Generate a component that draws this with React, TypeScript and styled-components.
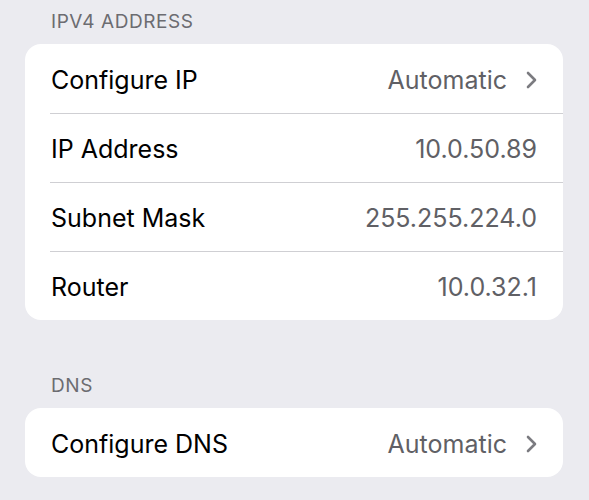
import React from "react";
import styled, { createGlobalStyle } from "styled-components";

const Global = createGlobalStyle`
  html, body {
    margin: 0;
    padding: 0;
    background: #ebebf0;
  }
  body {
    font-family: Inter, "Noto Sans", "Liberation Sans", sans-serif;
    -webkit-font-smoothing: antialiased;
  }
`;

const Page = styled.div`
  width: 589px;
  height: 500px;
  box-sizing: border-box;
  padding: 10px 26px 0 25px;
  background: #ebebf0;
  overflow: hidden;
`;

const Section = styled.section<{ $gap?: number }>`
  margin-top: ${(p) => p.$gap ?? 0}px;
`;

const Header = styled.div`
  padding-left: 26px;
  font-size: 19px;
  line-height: 23px;
  color: #6c6c71;
  letter-spacing: 0.55px;
  margin-bottom: 11px;
`;

const Card = styled.div`
  background: #ffffff;
  border-radius: 16px;
  overflow: hidden;
`;

const Row = styled.div`
  display: flex;
  padding-left: 25px;
`;

const RowInner = styled.div<{ $first: boolean }>`
  flex: 1;
  display: flex;
  align-items: center;
  justify-content: space-between;
  height: 69px;
  box-sizing: border-box;
  padding-right: 26px;
  padding-top: 2px;
  border-top: ${(p) => (p.$first ? "none" : "1px solid #cfcfd3")};
`;

const Label = styled.span`
  font-size: 25px;
  color: #000000;
  padding-left: 1px;
`;

const Value = styled.span`
  display: flex;
  align-items: center;
  gap: 19px;
  font-size: 25px;
  color: #606065;
`;

const Chevron = styled.svg`
  width: 11px;
  height: 18px;
  display: block;
`;

type Item = { label: string; value: string; link?: boolean };

const ChevronIcon = () => (
  <Chevron viewBox="0 0 11 18" fill="none">
    <path
      d="M2 2 L9 9 L2 16"
      stroke="#7b7b80"
      strokeWidth="2.6"
      strokeLinecap="round"
      strokeLinejoin="round"
    />
  </Chevron>
);

const Group = ({ items }: { items: Item[] }) => (
  <Card>
    {items.map((it, i) => (
      <Row key={it.label}>
        <RowInner $first={i === 0}>
          <Label>{it.label}</Label>
          <Value>
            {it.value}
            {it.link && <ChevronIcon />}
          </Value>
        </RowInner>
      </Row>
    ))}
  </Card>
);

export default function App() {
  return (
    <>
      <Global />
      <Page>
        <Section>
          <Header>IPV4 ADDRESS</Header>
          <Group
            items={[
              { label: "Configure IP", value: "Automatic", link: true },
              { label: "IP Address", value: "10.0.50.89" },
              { label: "Subnet Mask", value: "255.255.224.0" },
              { label: "Router", value: "10.0.32.1" },
            ]}
          />
        </Section>
        <Section $gap={54}>
          <Header>DNS</Header>
          <Group items={[{ label: "Configure DNS", value: "Automatic", link: true }]} />
        </Section>
      </Page>
    </>
  );
}
